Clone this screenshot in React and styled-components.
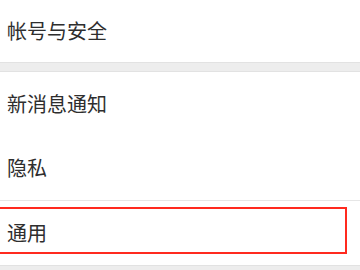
import React from "react";
import styled, { createGlobalStyle } from "styled-components";

const GlobalStyle = createGlobalStyle`
  html, body {
    margin: 0;
    padding: 0;
    background: #ffffff;
  }
  body {
    font-family: "Noto Sans CJK SC", "Noto Sans", sans-serif;
    overflow: hidden;
  }
`;

const sections = [
  [{ id: "account", label: "帐号与安全", height: 62 }],
  [
    { id: "notify", label: "新消息通知", height: 64 },
    { id: "privacy", label: "隐私", height: 65, divider: true },
    { id: "general", label: "通用", height: 64, highlighted: true },
  ],
];

const App = () => {
  return (
    <Page>
      <GlobalStyle />
      {sections.map((items, i) => (
        <React.Fragment key={i}>
          {i > 0 && <Gap />}
          <Group>
            {items.map((item) => (
              <Row key={item.id} $height={item.height} $divider={item.divider}>
                <Label>{item.label}</Label>
                {item.highlighted && <Highlight />}
              </Row>
            ))}
          </Group>
        </React.Fragment>
      ))}
      <Gap />
    </Page>
  );
};

const Page = styled.div`
  width: 360px;
  height: 270px;
  display: flex;
  flex-direction: column;
  background: #ffffff;
  overflow: hidden;
`;

const Group = styled.div`
  display: flex;
  flex-direction: column;
  background: #ffffff;
`;

const Gap = styled.div`
  flex-shrink: 0;
  height: 8px;
  background: #ededed;
  border-top: 1px solid #e2e2e2;
  border-bottom: 1px solid #e2e2e2;
`;

const Row = styled.div`
  position: relative;
  display: flex;
  align-items: center;
  flex-shrink: 0;
  height: ${(p) => p.$height}px;
  padding: 0 7px;
  box-sizing: border-box;
  border-bottom: ${(p) => (p.$divider ? "1px solid #e6e6e6" : "none")};
`;

const Label = styled.span`
  font-size: 20px;
  line-height: 1;
  color: #2e2e2e;
  letter-spacing: 0;
`;

const Highlight = styled.div`
  position: absolute;
  top: 6px;
  left: -2px;
  width: 349px;
  height: 47px;
  box-sizing: border-box;
  border: 2px solid #ff2a1f;
  pointer-events: none;
`;

export default App;
